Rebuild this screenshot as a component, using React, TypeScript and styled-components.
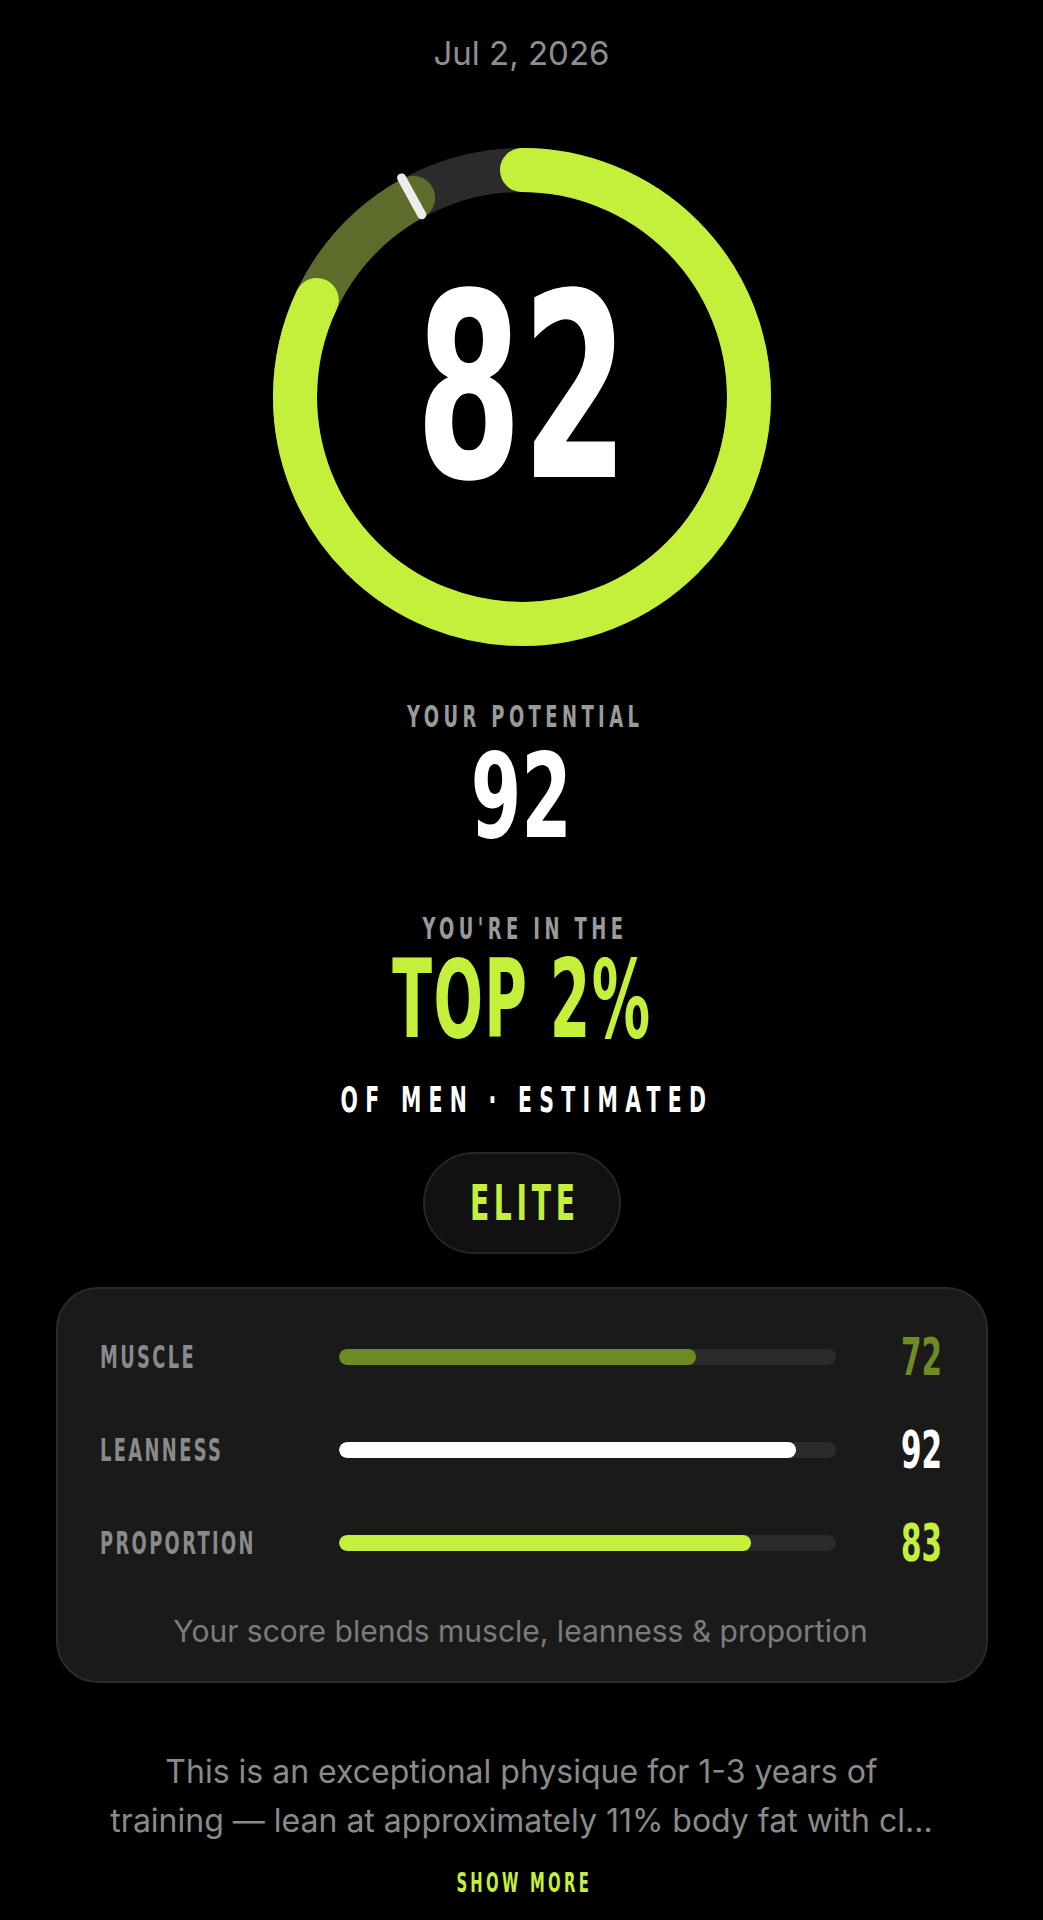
import React from "react";
import styled, { createGlobalStyle, css } from "styled-components";

const GREEN = "#c4f03b";
const OLIVE = "#6e8a23";
const TRACK = "#2b2b2b";

// condensed all-caps face used for numbers and labels
const display = css`
  font-family: "Liberation Sans Narrow", "DejaVu Sans Condensed", "Roboto", sans-serif;
  font-weight: 700;
  line-height: 1;
  white-space: nowrap;
`;

const GlobalStyle = createGlobalStyle`
  html, body {
    margin: 0;
    padding: 0;
    background: #000;
  }
  body {
    font-family: "Inter", "Noto Sans", sans-serif;
    -webkit-font-smoothing: antialiased;
  }
`;

const Page = styled.main`
  width: 1043px;
  min-height: 1920px;
  margin: 0 auto;
  display: flex;
  flex-direction: column;
  align-items: center;
  background: #000;
  overflow: hidden;
`;

const DateLabel = styled.div`
  margin-top: 37px;
  font-size: 33px;
  line-height: 1;
  font-weight: 400;
  color: #8e8e8e;
`;

const RingWrap = styled.div`
  position: relative;
  width: 520px;
  height: 520px;
  margin-top: 67px;
  flex-shrink: 0;
`;

const RingSvg = styled.svg`
  display: block;
`;

const ScoreValue = styled.div`
  ${display};
  position: absolute;
  inset: 0;
  display: flex;
  align-items: center;
  justify-content: center;
  padding-bottom: 18px;
  font-size: 257px;
  color: #fff;
  transform: scaleX(0.66);
`;

const Block = styled.div<{ $top: number }>`
  display: flex;
  flex-direction: column;
  align-items: center;
  margin-top: ${({ $top }) => $top}px;
`;

const SectionLabel = styled.div`
  ${display};
  font-size: 31px;
  letter-spacing: 0.22em;
  margin-right: -0.22em;
  color: #9a9a9a;
  transform: scaleX(0.645);
`;

const PotentialValue = styled.div`
  ${display};
  margin-top: 6px;
  font-size: 117px;
  color: #fff;
  transform: scaleX(0.69);
`;

const RankValue = styled.div`
  ${display};
  margin-top: 2px;
  font-size: 108px;
  letter-spacing: 0.02em;
  color: ${GREEN};
  transform: scaleX(0.6);
`;

const RankCaption = styled.div`
  ${display};
  margin-top: 28px;
  font-size: 36px;
  letter-spacing: 0.32em;
  margin-right: -0.32em;
  color: #fff;
  transform: scaleX(0.632);
`;

const TierPill = styled.div`
  box-sizing: border-box;
  width: 198px;
  height: 102px;
  margin-top: 34px;
  display: flex;
  align-items: center;
  justify-content: center;
  background: #111;
  border: 2px solid #262626;
  border-radius: 51px;
`;

const TierText = styled.span`
  ${display};
  display: inline-block;
  font-size: 49px;
  letter-spacing: 0.15em;
  margin-right: -0.15em;
  color: ${GREEN};
  transform: scaleX(0.64);
`;

const StatsCard = styled.section`
  box-sizing: border-box;
  width: 932px;
  height: 396px;
  margin-top: 33px;
  padding: 21px 44px 0 42px;
  display: flex;
  flex-direction: column;
  background: #1a1a1a;
  border: 2px solid #2a2a2a;
  border-radius: 42px;
`;

const StatRow = styled.div`
  display: grid;
  grid-template-columns: 239px 497px 1fr;
  align-items: center;
  height: 93px;
`;

const StatLabel = styled.div`
  ${display};
  font-size: 32px;
  letter-spacing: 0.12em;
  color: #8a8a8a;
  transform: scaleX(0.62);
  transform-origin: left center;
`;

const BarTrack = styled.div`
  height: 16px;
  border-radius: 8px;
  background: ${TRACK};
  overflow: hidden;
`;

const BarFill = styled.div<{ $color: string }>`
  height: 100%;
  border-radius: 8px;
  background: ${({ $color }) => $color};
`;

const StatValue = styled.div<{ $color: string }>`
  ${display};
  font-size: 52px;
  text-align: right;
  color: ${({ $color }) => $color};
  transform: scaleX(0.63);
  transform-origin: right center;
`;

const CardNote = styled.p`
  margin: 27px 0 0;
  font-size: 30px;
  line-height: 1;
  text-align: center;
  color: #7c7c7c;
`;

const Summary = styled.p`
  width: 850px;
  margin: 64px 0 0;
  font-size: 32px;
  line-height: 49px;
  text-align: center;
  color: #8a8a8a;
  display: -webkit-box;
  -webkit-line-clamp: 2;
  -webkit-box-orient: vertical;
  overflow: hidden;
`;

const ShowMore = styled.button`
  ${display};
  margin-top: 24px;
  padding: 0;
  border: 0;
  background: transparent;
  font-size: 27px;
  letter-spacing: 0.2em;
  margin-right: -0.2em;
  color: ${GREEN};
  transform: scaleX(0.61);
  cursor: pointer;
`;

const SIZE = 520;
const C = SIZE / 2;
const R = 227;
const STROKE = 44;
const CIRC = 2 * Math.PI * R;

function ScoreRing({ score, potential }: { score: number; potential: number }) {
  const angle = ((-90 + (potential / 100) * 360) * Math.PI) / 180;
  const tickIn = R - 19;
  const tickOut = R + 23;
  return (
    <RingSvg width={SIZE} height={SIZE} viewBox={`0 0 ${SIZE} ${SIZE}`}>
      <circle cx={C} cy={C} r={R} fill="none" stroke={TRACK} strokeWidth={STROKE} />
      <g transform={`rotate(-90 ${C} ${C})`}>
        <circle
          cx={C}
          cy={C}
          r={R}
          fill="none"
          stroke="#5d6c2b"
          strokeWidth={STROKE}
          strokeLinecap="round"
          strokeDasharray={`${(potential / 100) * CIRC} ${CIRC}`}
        />
        <circle
          cx={C}
          cy={C}
          r={R}
          fill="none"
          stroke={GREEN}
          strokeWidth={STROKE}
          strokeLinecap="round"
          strokeDasharray={`${(score / 100) * CIRC} ${CIRC}`}
        />
      </g>
      <line
        x1={C + tickIn * Math.cos(angle)}
        y1={C + tickIn * Math.sin(angle)}
        x2={C + tickOut * Math.cos(angle)}
        y2={C + tickOut * Math.sin(angle)}
        stroke="#ececec"
        strokeWidth={9}
        strokeLinecap="round"
      />
    </RingSvg>
  );
}

const stats = [
  { label: "MUSCLE", value: 72, bar: OLIVE, text: "#6f8c24" },
  { label: "LEANNESS", value: 92, bar: "#ffffff", text: "#ffffff" },
  { label: "PROPORTION", value: 83, bar: GREEN, text: GREEN },
];

export default function App() {
  const score = 82;
  const potential = 92;

  return (
    <>
      <GlobalStyle />
      <Page>
        <DateLabel>Jul 2, 2026</DateLabel>

        <RingWrap>
          <ScoreRing score={score} potential={potential} />
          <ScoreValue>{score}</ScoreValue>
        </RingWrap>

        <Block $top={44}>
          <SectionLabel>YOUR POTENTIAL</SectionLabel>
          <PotentialValue>{potential}</PotentialValue>
        </Block>

        <Block $top={58}>
          <SectionLabel>YOU'RE IN THE</SectionLabel>
          <RankValue>TOP 2%</RankValue>
          <RankCaption>OF MEN · ESTIMATED</RankCaption>
        </Block>

        <TierPill>
          <TierText>ELITE</TierText>
        </TierPill>

        <StatsCard>
          {stats.map((s) => (
            <StatRow key={s.label}>
              <StatLabel>{s.label}</StatLabel>
              <BarTrack>
                <BarFill $color={s.bar} style={{ width: `${s.value}%` }} />
              </BarTrack>
              <StatValue $color={s.text}>{s.value}</StatValue>
            </StatRow>
          ))}
          <CardNote>Your score blends muscle, leanness &amp; proportion</CardNote>
        </StatsCard>

        <Summary>
          This is an exceptional physique for 1-3 years of training{"\u00a0"}— lean at approximately
          11% body fat with cl…
        </Summary>

        <ShowMore type="button">SHOW MORE</ShowMore>
      </Page>
    </>
  );
}
